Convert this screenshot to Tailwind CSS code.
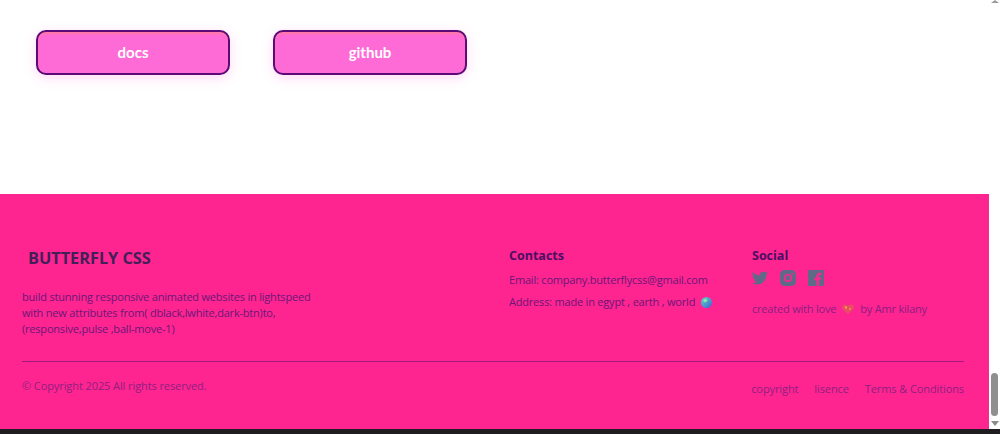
<!DOCTYPE html>
<html lang="en">
<head>
  <meta charset="UTF-8">
  <title>Butterfly CSS</title>
  <meta name="viewport" content="width=device-width, initial-scale=1.0">
  <script src="https://cdn.jsdelivr.net/npm/@tailwindcss/browser@4"></script>
</head>
<body class="bg-white h-[434px] w-[1000px] overflow-hidden flex flex-col font-['Open_Sans',sans-serif]">
  <div class="flex flex-1 min-h-0">
    <main class="flex-1 flex flex-col">
      <!-- buttons -->
      <section class="h-[194px] pt-[30px] pl-[36px] flex items-start gap-[43px]">
        <a class="w-[194px] h-[45px] flex items-center justify-center rounded-[10px] border-2 border-[#5c0a78] bg-[#ff6bd6] shadow-[0_3px_12px_rgba(255,107,214,0.25),inset_0_2px_2px_rgba(255,140,110,0.45)] text-white text-[15px] font-bold font-['Lato',sans-serif]">docs</a>
        <a class="w-[194px] h-[45px] flex items-center justify-center rounded-[10px] border-2 border-[#5c0a78] bg-[#ff6bd6] shadow-[0_3px_12px_rgba(255,107,214,0.25),inset_0_2px_2px_rgba(255,140,110,0.45)] text-white text-[15px] font-bold font-['Lato',sans-serif]">github</a>
      </section>

      <!-- footer -->
      <footer class="flex-1 bg-[#fe2590] pl-[22px] pr-[25px] pt-[52px]">
        <div class="flex h-[116px] border-b border-[#a3187f]">
          <div class="w-[487px]">
            <h2 class="pl-[6px] text-[16.3px] leading-[24px] font-bold text-[#412058]">BUTTERFLY CSS</h2>
            <p class="mt-[19px] w-[300px] text-[11px] tracking-[-0.2px] leading-[16px] text-[#6a1777]">build stunning responsive animated websites in lightspeed<br>with new attributes from( dblack,lwhite,dark-btn)to,<br>(responsive,pulse ,ball-move-1)</p>
          </div>
          <div class="w-[243px]">
            <h3 class="text-[12.5px] leading-[20px] font-bold text-[#4a0f63]">Contacts</h3>
            <p class="mt-[5px] text-[11px] tracking-[-0.2px] leading-[18px] text-[#6a1777]">Email: company.butterflycss@gmail.com</p>
            <p class="mt-[4px] text-[11px] tracking-[-0.2px] leading-[18px] text-[#6a1777] flex items-center gap-[6px]">Address: made in egypt , earth , world
              <svg class="w-[11px] h-[11px]" viewBox="0 0 12 12"><defs><linearGradient id="globe" x1="0" y1="0" x2="1" y2="1"><stop offset="0" stop-color="#5fd8c0"/><stop offset="1" stop-color="#3a62d8"/></linearGradient></defs><circle cx="6" cy="6" r="6" fill="url(#globe)"/><path d="M3 2.500 6 1.800 7 4 4.500 6 2.500 4.500Z" fill="#8fe6a8"/></svg>
            </p>
          </div>
          <div>
            <h3 class="text-[12.5px] leading-[20px] font-bold text-[#4a0f63]">Social</h3>
            <div class="flex gap-[12px] mt-[4px] text-[#5f6a86]">
              <svg class="w-[16px] h-[16px]" viewBox="0 0 24 24" fill="currentColor"><path d="M23.95 4.57a10 10 0 0 1-2.82.77 4.96 4.96 0 0 0 2.16-2.72 9.9 9.9 0 0 1-3.12 1.19 4.92 4.92 0 0 0-8.38 4.48A13.98 13.98 0 0 1 1.64 3.16a4.92 4.92 0 0 0 1.52 6.57 4.9 4.9 0 0 1-2.23-.61v.06a4.92 4.92 0 0 0 3.95 4.83 5 5 0 0 1-2.21.08 4.94 4.94 0 0 0 4.6 3.42A9.87 9.87 0 0 1 0 19.54a13.94 13.94 0 0 0 7.55 2.21c9.05 0 14-7.5 14-13.98 0-.21 0-.42-.02-.63a9.94 9.94 0 0 0 2.46-2.55z"/></svg>
              <svg class="w-[16px] h-[16px]" viewBox="0 0 24 24" fill="currentColor"><path fill-rule="evenodd" d="M7 0h10a7 7 0 0 1 7 7v10a7 7 0 0 1-7 7H7a7 7 0 0 1-7-7V7a7 7 0 0 1 7-7zm5 6a6 6 0 1 0 0 12 6 6 0 0 0 0-12zm0 2.400a3.600 3.600 0 1 1 0 7.200 3.600 3.600 0 0 1 0-7.200zM18.400 4.200a1.400 1.400 0 1 0 0 2.800 1.400 1.400 0 0 0 0-2.800z"/></svg>
              <svg class="w-[16px] h-[16px]" viewBox="0 0 24 24" fill="currentColor"><path d="M1.500 0h21A1.500 1.500 0 0 1 24 1.500v21a1.500 1.500 0 0 1-1.500 1.500H16.500v-9.300h3.100l.5-3.600h-3.600V9.300c0-1 .3-1.800 1.800-1.800h1.900V4.300a25 25 0 0 0-2.800-.1c-2.800 0-4.600 1.700-4.600 4.800v2.600H9.700v3.600h3.100V24H1.500A1.500 1.500 0 0 1 0 22.500v-21A1.500 1.500 0 0 1 1.500 0z"/></svg>
            </div>
            <p class="mt-[14px] text-[11px] tracking-[-0.2px] leading-[18px] text-[#8a1f80] flex items-center gap-[6px]">created with love
              <svg class="w-[12px] h-[12px]" viewBox="0 0 12 12"><path d="M6 11 1 6.200C-.5 4.500.5 1.500 3 1.500c1.300 0 2.300.8 3 1.800.7-1 1.700-1.800 3-1.800 2.500 0 3.500 3 2 4.700Z" fill="#e8505f"/><circle cx="4" cy="4.500" r="1" fill="#ffb35c"/><circle cx="8" cy="6" r=".8" fill="#ffb35c"/></svg>
              by Amr kilany</p>
          </div>
        </div>
        <div class="flex justify-between items-start">
          <p class="mt-[15px] text-[11px] tracking-[-0.09px] leading-[18px] text-[#8f2080]">© Copyright 2025 All rights reserved.</p>
          <nav class="mt-[18px] flex gap-[16px] text-[11px] tracking-[-0.1px] leading-[18px] text-[#8f2080]">
            <a>copyright</a>
            <a>lisence</a>
            <a>Terms &amp; Conditions</a>
          </nav>
        </div>
      </footer>
    </main>

    <!-- scrollbar -->
    <div class="w-[11px] bg-white flex flex-col items-center">
      <div class="w-0 h-0 border-x-[4px] border-x-transparent border-b-[3px] border-b-[#9a9a9a]"></div>
      <div class="flex-1"></div>
      <div class="w-[7px] h-[43px] rounded-[4px] bg-[#8f8f8f]"></div>
      <div class="w-0 h-0 mt-[5px] mb-[3px] border-x-[4px] border-x-transparent border-t-[5px] border-t-[#8a8a8a]"></div>
    </div>
  </div>
  <div class="h-[5px] bg-[#1f1d20]"></div>
</body>
</html>
